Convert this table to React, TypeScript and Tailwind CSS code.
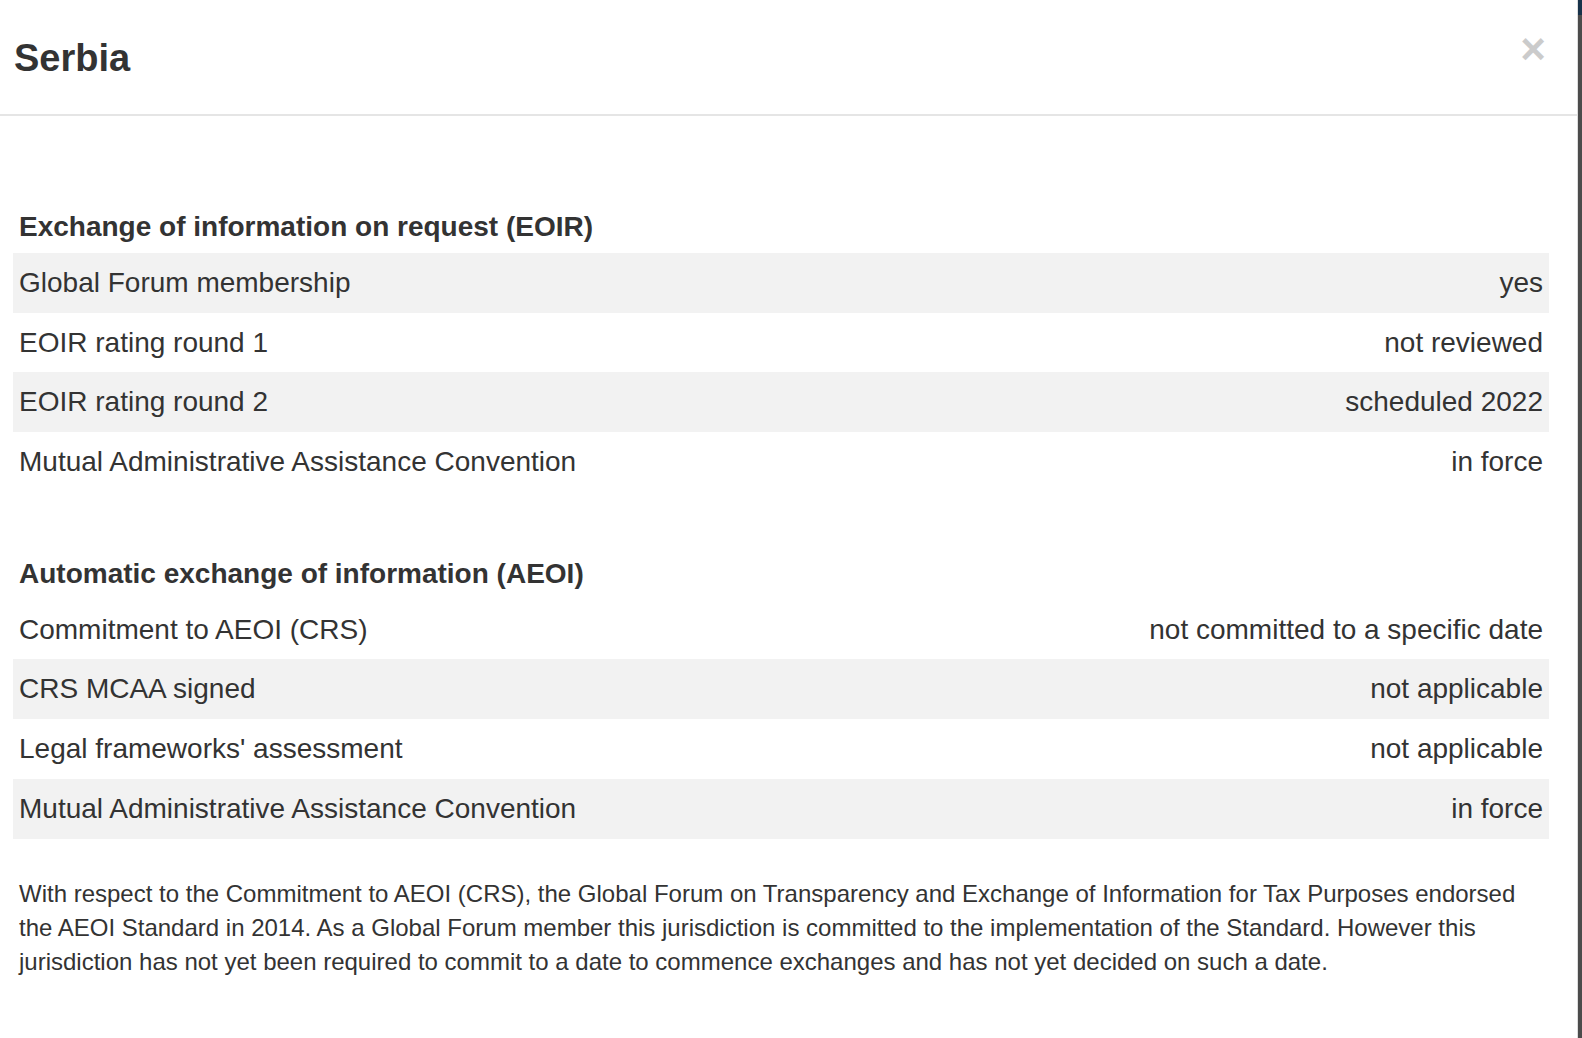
const eoir = [
  ["Global Forum membership", "yes"],
  ["EOIR rating round 1", "not reviewed"],
  ["EOIR rating round 2", "scheduled 2022"],
  ["Mutual Administrative Assistance Convention", "in force"],
];

const aeoi = [
  ["Commitment to AEOI (CRS)", "not committed to a specific date"],
  ["CRS MCAA signed", "not applicable"],
  ["Legal frameworks' assessment", "not applicable"],
  ["Mutual Administrative Assistance Convention", "in force"],
];

const Section = ({ title, rows, stripeOdd }: { title: string; rows: string[][]; stripeOdd: boolean }) => (
  <div>
    <h4 className="px-[6px] text-[28px] font-bold leading-[40px] mb-[6px]">{title}</h4>
    <div>
      {rows.map(([label, value], i) => (
        <div
          key={i}
          className={
            "flex justify-between px-[6px] h-[59.7px] items-center text-[28px] leading-[40px] " +
            ((i % 2 === 0) === stripeOdd ? "bg-[#f2f2f2]" : "bg-white")
          }
        >
          <span>{label}</span>
          <span>{value}</span>
        </div>
      ))}
    </div>
  </div>
);

export default function App() {
  return (
    <div
      className="flex h-screen w-full overflow-hidden bg-white text-[#333]"
      style={{ fontFamily: '"Liberation Sans", Arial, sans-serif' }}
    >
      <div className="flex-1 flex flex-col border-r border-[#ddd]">
        <div className="relative h-[116px] flex items-center px-[14px] border-b-2 border-[#e5e5e5] shrink-0">
          <h3 className="text-[38px] font-bold leading-none mt-[2px]">Serbia</h3>
          <button className="absolute right-[31px] top-[27px] text-[44px] font-bold leading-none text-black opacity-20">
            ×
          </button>
        </div>
        <div className="pl-[13px] pr-[28px] pt-[91px]">
          <Section title="Exchange of information on request (EOIR)" rows={eoir} stripeOdd={true} />
          <div className="h-[62px]" />
          <Section title="Automatic exchange of information (AEOI)" rows={aeoi} stripeOdd={false} />
          <p className="px-[6px] mt-[38px] text-[24px] leading-[34.3px]">
            With respect to the Commitment to AEOI (CRS), the Global Forum on Transparency and Exchange of
            Information for Tax Purposes endorsed the AEOI Standard in 2014. As a Global Forum member this
            jurisdiction is committed to the implementation of the Standard. However this jurisdiction has not yet
            been required to commit to a date to commence exchanges and has not yet decided on such a date.
          </p>
        </div>
      </div>
      <div className="w-[4px] flex flex-col bg-[#4b4b4b]">
        <div className="h-[15px] bg-[#17324a]" />
      </div>
    </div>
  );
}
